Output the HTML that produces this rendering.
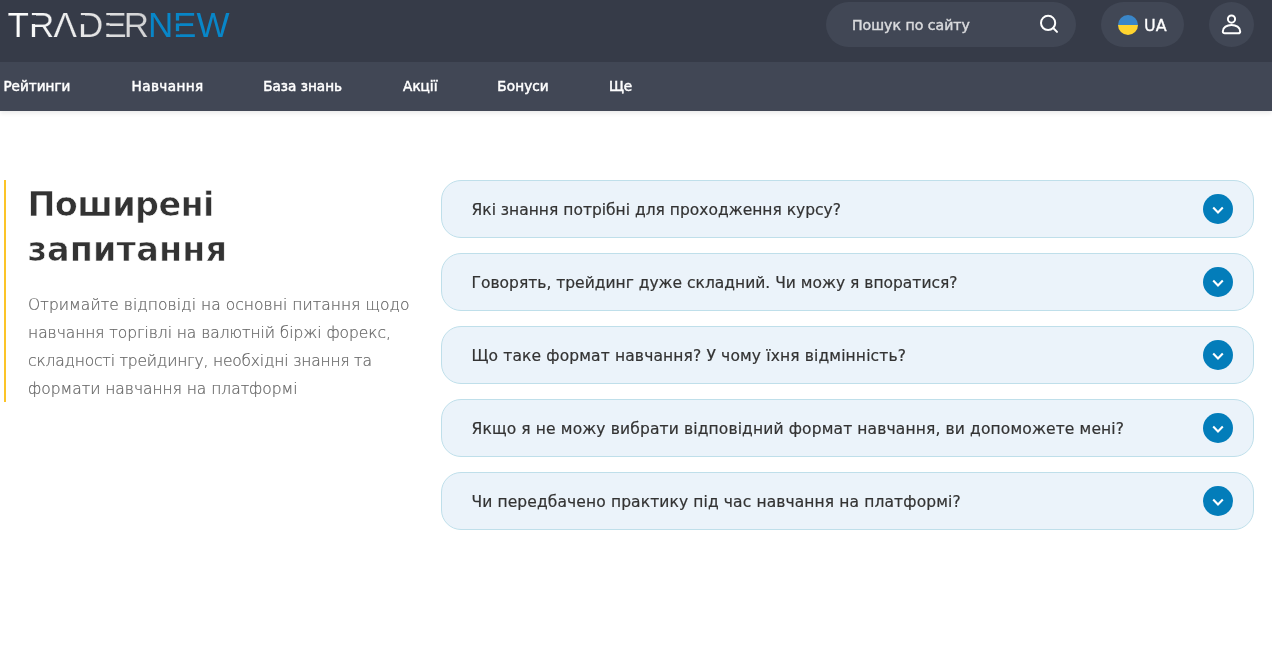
<!DOCTYPE html>
<html lang="uk">
<head>
<meta charset="utf-8">
<title>TraderNew — Поширені запитання</title>
<style>
*{box-sizing:border-box;margin:0;padding:0}
html,body{width:1272px;height:666px;overflow:hidden;background:#fff}
body{position:relative;font-family:"DejaVu Sans","Liberation Sans",sans-serif;color:#333}
#w{position:absolute;left:0;top:0;width:1272px;height:666px;will-change:transform}
.topbar{position:absolute;left:0;top:0;width:1272px;height:62px;background:#363b48;z-index:2}
.navbar{position:absolute;left:0;top:62px;width:1272px;height:49px;background:#414755;box-shadow:0 2px 5px rgba(0,0,0,.09);z-index:1}
.logo{position:absolute;left:0;top:0;width:240px;height:50px}
.nav a{position:absolute;top:0;height:48px;line-height:48px;color:#fff;text-decoration:none;white-space:nowrap;
  font-family:"DejaVu Sans","Liberation Sans",sans-serif;font-size:13.6px;-webkit-text-stroke:.5px #fff}
.search{position:absolute;left:826px;top:2px;width:250px;height:45px;border-radius:23px;background:#414755}
.search span{position:absolute;left:26px;top:1px;line-height:45px;color:#d9dadd;white-space:nowrap;
  font-family:"DejaVu Sans","Liberation Sans",sans-serif;font-size:14.1px;-webkit-text-stroke:.45px #d9dadd}
.search svg{position:absolute;left:210px;top:10px}
.lang{position:absolute;left:1101px;top:2px;width:83px;height:45px;border-radius:23px;background:#414755}
.lang .flag{position:absolute;left:17px;top:13px;width:20px;height:20px;border-radius:50%;background:linear-gradient(#3a86c8 0 50%,#ffd42f 50% 100%)}
.lang span{position:absolute;left:43px;top:1px;line-height:45px;color:#fff;font-family:"DejaVu Sans","Liberation Sans",sans-serif;font-size:16px;-webkit-text-stroke:.3px #fff}
.user{position:absolute;left:1209px;top:2px;width:45px;height:45px;border-radius:50%;background:#414755}
.user svg{position:absolute;left:0;top:0}
.bar{position:absolute;left:4px;top:180px;width:2px;height:222px;background:#fcc428}
h1{position:absolute;left:27.4px;top:182px;font-family:"DejaVu Sans","Liberation Sans",sans-serif;font-weight:bold;font-size:33.6px;line-height:45px;color:#333;white-space:nowrap;letter-spacing:-.68px;-webkit-text-stroke:.7px #fff}
.lead{position:absolute;left:28.1px;top:291px;-webkit-text-stroke:.22px #676767;width:400px;font-family:"DejaVu Sans Light","DejaVu Sans","Liberation Sans",sans-serif;font-size:15.5px;line-height:28px;color:#676767;white-space:nowrap}
.faq{position:absolute;left:441px;width:813px;height:58px;border:1px solid #bfdfea;border-radius:20px;background:#ebf3fa}
.faq span{position:absolute;left:29.5px;top:1.2px;line-height:56px;font-size:15.5px;color:#333;white-space:nowrap;-webkit-text-stroke:.2px #333}
.faq i{position:absolute;left:761px;top:13px;width:30px;height:30px;border-radius:50%;background:#037dba}
.faq i svg{position:absolute;left:0;top:0}
</style>
</head>
<body>
<div id="w">
<div class="topbar">
  <svg class="logo" viewBox="0 0 240 50">
    <defs><linearGradient id="lg" gradientUnits="userSpaceOnUse" x1="8" y1="0" x2="146" y2="0"><stop offset="0" stop-color="#ffffff"/><stop offset="1" stop-color="#d2d2d4"/></linearGradient></defs>
    <text font-family="Liberation Sans, sans-serif" font-size="35" stroke="#363b48" stroke-width="0.2">
      <tspan fill="url(#lg)" y="36.6" x="7.4 29.1 53.5 78 103.2 123.8">TRADER</tspan><tspan fill="#0886c8" stroke="none" y="37.1" x="148 173 196.4">NEW</tspan>
    </text>
    <g fill="#363b48">
      <rect x="31" y="15.13" width="5" height="8.89"/>
      <polygon points="60.83,26.7 69.6,26.7 70.82,29.9 59.59,29.9"/>
      <rect x="80" y="15.13" width="5" height="9"/>
      <rect x="105" y="15.18" width="5" height="7.73"/>
      <rect x="105" y="25.54" width="5" height="8.39"/>
      <rect x="175" y="20.6" width="5" height="2.81"/>
      <rect x="175" y="31.1" width="5" height="3.33"/>
    </g>
  </svg>
  <div class="search"><span>Пошук по сайту</span>
    <svg width="24" height="24" viewBox="0 0 24 24" fill="none" stroke="#fff" stroke-width="2" stroke-linecap="round"><circle cx="12.1" cy="10.9" r="7.1"/><path d="M17.2 16 L21 19.9"/></svg>
  </div>
  <div class="lang"><div class="flag"></div><span>UA</span></div>
  <div class="user"><svg width="45" height="45" viewBox="0 0 45 45" fill="none" stroke="#fff" stroke-width="2" stroke-linejoin="round"><circle cx="22.5" cy="17.1" r="3.6"/><path d="M13.8 29.4 C13.8 25.5 18 22.9 22.5 22.9 C27 22.9 31.2 25.5 31.2 29.4 C31.2 30.6 30.3 31.2 29.3 31.2 H15.7 C14.7 31.2 13.8 30.6 13.8 29.4 Z"/></svg></div>
</div>
<div class="navbar nav">
  <a style="left:3.4px">Рейтинги</a>
  <a style="left:131.6px;letter-spacing:.4px">Навчання</a>
  <a style="left:263.2px">База знань</a>
  <a style="left:403.1px">Акції</a>
  <a style="left:497.3px;letter-spacing:.1px">Бонуси</a>
  <a style="left:608.9px">Ще</a>
</div>
<div class="bar"></div>
<h1>Поширені<br><span style="letter-spacing:.08px">запитання</span></h1>
<p class="lead"><span style="letter-spacing:.057px">Отримайте відповіді на основні питання щодо</span><br><span style="letter-spacing:-.057px">навчання торгівлі на валютній біржі форекс,</span><br><span style="letter-spacing:-.19px">складності трейдингу, необхідні знання та</span><br><span style="letter-spacing:-.03px">формати навчання на платформі</span></p>

<div class="faq" style="top:180px"><span>Які знання потрібні для проходження курсу?</span><i><svg width="30" height="30" viewBox="0 0 30 30" fill="none" stroke="#fff" stroke-width="2.1" stroke-linecap="butt" stroke-linejoin="miter"><path d="M10.2 13.6 L15 18.6 L19.8 13.6"/></svg></i></div>
<div class="faq" style="top:253px"><span>Говорять, трейдинг дуже складний. Чи можу я впоратися?</span><i><svg width="30" height="30" viewBox="0 0 30 30" fill="none" stroke="#fff" stroke-width="2.1" stroke-linecap="butt" stroke-linejoin="miter"><path d="M10.2 13.6 L15 18.6 L19.8 13.6"/></svg></i></div>
<div class="faq" style="top:326px"><span style="letter-spacing:.135px">Що таке формат навчання? У чому їхня відмінність?</span><i><svg width="30" height="30" viewBox="0 0 30 30" fill="none" stroke="#fff" stroke-width="2.1" stroke-linecap="butt" stroke-linejoin="miter"><path d="M10.2 13.6 L15 18.6 L19.8 13.6"/></svg></i></div>
<div class="faq" style="top:399px"><span style="letter-spacing:.134px">Якщо я не можу вибрати відповідний формат навчання, ви допоможете мені?</span><i><svg width="30" height="30" viewBox="0 0 30 30" fill="none" stroke="#fff" stroke-width="2.1" stroke-linecap="butt" stroke-linejoin="miter"><path d="M10.2 13.6 L15 18.6 L19.8 13.6"/></svg></i></div>
<div class="faq" style="top:472px"><span style="letter-spacing:.113px">Чи передбачено практику під час навчання на платформі?</span><i><svg width="30" height="30" viewBox="0 0 30 30" fill="none" stroke="#fff" stroke-width="2.1" stroke-linecap="butt" stroke-linejoin="miter"><path d="M10.2 13.6 L15 18.6 L19.8 13.6"/></svg></i></div>
</div>
</body>
</html>
